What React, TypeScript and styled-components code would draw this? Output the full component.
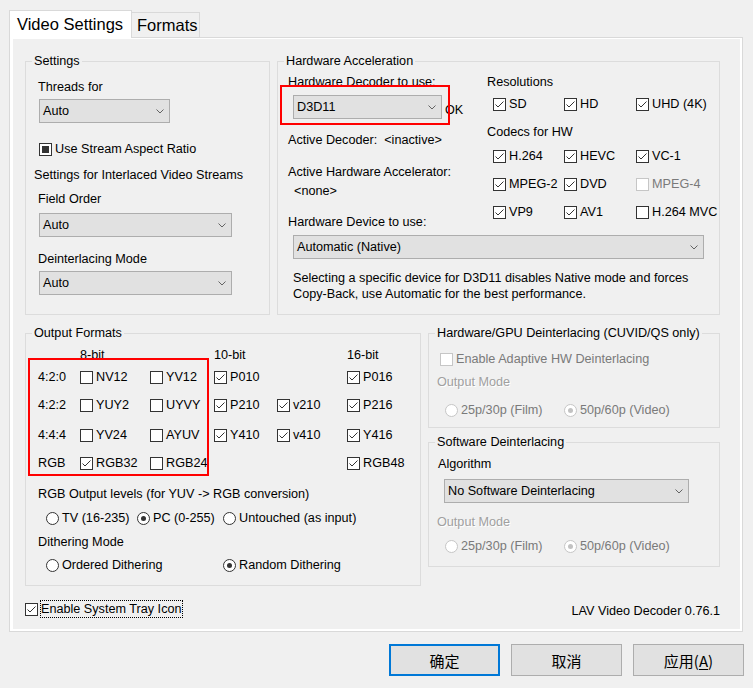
import React from "react";
import styled, { createGlobalStyle } from "styled-components";

const Global = createGlobalStyle`
  html, body { margin: 0; padding: 0; background: #f0f0f0; }
  body {
    font-family: "Liberation Sans", Arial, sans-serif;
    font-size: 12.65px;
    color: #000;
  }
  * { box-sizing: border-box; }
`;

const Window = styled.div`
  width: 753px;
  height: 688px;
  padding: 10px 10px 0 9px;
  display: flex;
  flex-direction: column;
  background: #f0f0f0;
`;

const TabStrip = styled.div`
  display: flex;
  align-items: flex-end;
  height: 28px;
`;

const Tab = styled.div<{ $active?: boolean }>`
  font-size: 16.5px;
  line-height: 20px;
  white-space: nowrap;
  display: flex;
  align-items: center;
  border: 1px solid #d9d9d9;
  ${(p) =>
    p.$active
      ? `
    height: 28px;
    width: 123px;
    padding: 0 0 2px 7px;
    background: #ffffff;
    border-bottom: none;
    position: relative;
    z-index: 1;
  `
      : `
    height: 25px;
    width: 68px;
    padding: 0 0 0 5px;
    margin-bottom: 1px;
    background: #f0f0f0;
    border-left: none;
    border-bottom: none;
  `}
`;

const Page = styled.div`
  height: 595px;
  margin-top: -1px;
  border: 1px solid #d9d9d9;
  background: #ffffff;
  padding: 1px 2px 2px 3px;
  display: flex;
`;

const Inner = styled.div`
  flex: 1;
  background: #f0f0f0;
  padding: 14px 0 0 12px;
  display: flex;
  flex-direction: column;
`;

const Row = styled.div<{ $cols: string; $h: number; $mt?: number }>`
  display: grid;
  grid-template-columns: ${(p) => p.$cols};
  column-gap: 7px;
  height: ${(p) => p.$h}px;
  margin-top: ${(p) => p.$mt ?? 0}px;
`;

const Stack = styled.div<{ $gap?: number }>`
  display: flex;
  flex-direction: column;
  gap: ${(p) => p.$gap ?? 0}px;
`;

const Group = styled.fieldset<{ $h?: number }>`
  margin: 0;
  padding: 0;
  min-width: 0;
  border: 1px solid #dcdcdc;
  height: ${(p) => (p.$h ? `${p.$h}px` : "100%")};
  display: block;
`;

const Legend = styled.legend`
  margin-left: 6px;
  padding: 0 2px;
  line-height: 16px;
  white-space: nowrap;
`;

type Tone = "normal" | "disabled" | "etched";

const Text = styled.div<{ $mt?: number; $ml?: number; $tone?: Tone }>`
  line-height: 16px;
  white-space: nowrap;
  margin-top: ${(p) => p.$mt ?? 0}px;
  margin-left: ${(p) => p.$ml ?? 0}px;
  color: ${(p) =>
    p.$tone === "disabled" ? "#7a7a7a" : p.$tone === "etched" ? "#a0a0a0" : "#000"};
  text-shadow: ${(p) => (p.$tone === "etched" ? "1px 1px 0 #ffffff" : "none")};
`;

const Gap = styled.span<{ $w: number }>`
  display: inline-block;
  width: ${(p) => p.$w}px;
`;

const SelectBox = styled.div<{ $w: number; $mt?: number; $ml?: number }>`
  width: ${(p) => p.$w}px;
  height: 24px;
  margin-top: ${(p) => p.$mt ?? 0}px;
  margin-left: ${(p) => p.$ml ?? 0}px;
  border: 1px solid #adadad;
  background: #e1e1e1;
  display: flex;
  align-items: center;
  justify-content: space-between;
  padding: 0 5px 0 3px;
  line-height: 16px;
  white-space: nowrap;
  flex: none;
`;

const Chevron = () => (
  <svg width="8" height="5" viewBox="0 0 8 5">
    <path d="M0.5 0.5 L4 4 L7.5 0.5" fill="none" stroke="#555" strokeWidth="0.9" />
  </svg>
);

const Select = ({ value, w, mt, ml }: { value: string; w: number; mt?: number; ml?: number }) => (
  <SelectBox $w={w} $mt={mt} $ml={ml}>
    <span>{value}</span>
    <Chevron />
  </SelectBox>
);

const CheckRow = styled.div<{ $mt?: number; $ml?: number; $w?: number }>`
  display: flex;
  align-items: center;
  gap: 3px;
  height: 16px;
  line-height: 16px;
  white-space: nowrap;
  margin-top: ${(p) => p.$mt ?? 0}px;
  margin-left: ${(p) => p.$ml ?? 0}px;
  width: ${(p) => (p.$w ? `${p.$w}px` : "auto")};
  flex: none;
`;

const Box = styled.span<{ $disabled?: boolean; $round?: boolean }>`
  width: 13px;
  height: 13px;
  flex: none;
  border: 1px solid ${(p) => (p.$disabled ? "#c6c6c6" : "#333333")};
  border-radius: ${(p) => (p.$round ? "50%" : "0")};
  background: #ffffff;
  display: inline-flex;
  align-items: center;
  justify-content: center;
`;

const MixedMark = styled.span`
  width: 7px;
  height: 7px;
  background: #333333;
`;

const Dot = styled.span<{ $disabled?: boolean }>`
  width: 5px;
  height: 5px;
  border-radius: 50%;
  background: ${(p) => (p.$disabled ? "#c2c2c2" : "#333333")};
`;

const Tick = () => (
  <svg width="11" height="11" viewBox="0 0 11 11">
    <path d="M1.5 5.5 L4 8 L9.5 2.5" fill="none" stroke="#333" strokeWidth="1" />
  </svg>
);

const Label = styled.span<{ $disabled?: boolean }>`
  color: ${(p) => (p.$disabled ? "#7a7a7a" : "#000")};
`;

type CheckProps = {
  label: string;
  state?: "on" | "off" | "mixed";
  disabled?: boolean;
  mt?: number;
  ml?: number;
};

const Check = ({ label, state = "off", disabled, mt, ml }: CheckProps) => (
  <CheckRow $mt={mt} $ml={ml}>
    <Box $disabled={disabled}>
      {state === "on" && <Tick />}
      {state === "mixed" && <MixedMark />}
    </Box>
    <Label $disabled={disabled}>{label}</Label>
  </CheckRow>
);

const Radio = ({ label, on, disabled, w }: { label: string; on?: boolean; disabled?: boolean; w?: number }) => (
  <CheckRow $w={w}>
    <Box $round $disabled={disabled}>
      {on && <Dot $disabled={disabled} />}
    </Box>
    <Label $disabled={disabled}>{label}</Label>
  </CheckRow>
);

const Highlight = styled.div<{ $l: number; $t: number; $w: number; $h: number }>`
  position: absolute;
  left: ${(p) => p.$l}px;
  top: ${(p) => p.$t}px;
  width: ${(p) => p.$w}px;
  height: ${(p) => p.$h}px;
  border: 2px solid #ff0000;
  pointer-events: none;
`;

/* Hardware acceleration */
const HwGrid = styled.div`
  display: grid;
  grid-template-columns: 209px 1fr;
  grid-template-rows: 145px 16px auto auto;
`;

const HwLeft = styled.div`
  grid-column: 1;
  grid-row: 1;
  display: flex;
  flex-direction: column;
`;

const HwRight = styled.div`
  grid-column: 2;
  grid-row: 1 / span 2;
  display: flex;
  flex-direction: column;
`;

const HwWide = styled.div<{ $row: number; $span?: number }>`
  grid-row: ${(p) => p.$row};
  grid-column: 1 / span ${(p) => p.$span ?? 2};
`;

const DecoderRow = styled.div`
  position: relative;
  display: flex;
  align-items: flex-start;
  margin: 5px 0 0 15px;
`;

const OkText = styled.span`
  margin: 7px 0 0 3px;
  line-height: 16px;
`;

const CodecGrid = styled.div<{ $mt?: number }>`
  display: grid;
  grid-template-columns: 71px 72px auto;
  row-gap: 12px;
  margin-left: 6px;
  margin-top: ${(p) => p.$mt ?? 0}px;
`;

/* Output formats */
const FormatGrid = styled.div`
  position: relative;
  display: grid;
  grid-template-columns: 42px 70px 64px 63px 70px auto;
  grid-template-rows: 22px 28px 30px 28px 16px;
  align-items: start;
  margin: 6px 0 0 12px;
`;

const Cell = styled.div<{ $col: number; $row?: number }>`
  grid-column: ${(p) => p.$col};
  grid-row: ${(p) => p.$row ?? 1};
  line-height: 16px;
  white-space: nowrap;
`;

const RadioLine = styled.div<{ $mt: number; $ml: number }>`
  display: flex;
  margin-top: ${(p) => p.$mt}px;
  margin-left: ${(p) => p.$ml}px;
`;

const Footer = styled.div`
  display: flex;
  justify-content: space-between;
  align-items: flex-start;
  width: 695px;
  margin-top: 14px;
`;

const TrayRow = styled.div`
  display: flex;
  align-items: center;
  gap: 2px;
`;

const FocusLabel = styled.span`
  padding: 1px 1px;
  line-height: 16px;
  outline: 1px dotted #000;
  outline-offset: -1px;
  white-space: nowrap;
`;

const Version = styled.div`
  margin-top: 3px;
  line-height: 16px;
  white-space: nowrap;
`;

const ButtonRow = styled.div`
  display: flex;
  justify-content: flex-end;
  gap: 11px;
  margin-top: 12px;
  margin-right: -1px;
`;

const Button = styled.div<{ $primary?: boolean }>`
  width: 111px;
  height: 32px;
  display: flex;
  align-items: center;
  justify-content: center;
  background: #e1e1e1;
  border: ${(p) => (p.$primary ? "2px solid #0078d7" : "1px solid #adadad")};
  font-family: "Noto Sans CJK SC", "Liberation Sans", sans-serif;
  font-size: 15px;
  color: #000;
`;

const Access = styled.span`
  text-decoration: underline;
  text-underline-offset: 2px;
`;

const fmtRows: { label: string; cells: [number, string, boolean][] }[] = [
  { label: "4:2:0", cells: [[2, "NV12", false], [3, "YV12", false], [4, "P010", true], [6, "P016", true]] },
  { label: "4:2:2", cells: [[2, "YUY2", false], [3, "UYVY", false], [4, "P210", true], [5, "v210", true], [6, "P216", true]] },
  { label: "4:4:4", cells: [[2, "YV24", false], [3, "AYUV", false], [4, "Y410", true], [5, "v410", true], [6, "Y416", true]] },
  { label: "RGB", cells: [[2, "RGB32", true], [3, "RGB24", false], [6, "RGB48", true]] },
];

export default function App() {
  return (
    <>
      <Global />
      <Window>
        <TabStrip>
          <Tab $active>Video Settings</Tab>
          <Tab>Formats</Tab>
        </TabStrip>
        <Page>
          <Inner>
            <Row $cols="245px 443px" $h={262}>
              <Group>
                <Legend>Settings</Legend>
                <Text $mt={10} $ml={12}>Threads for</Text>
                <Select value="Auto" w={131} mt={4} ml={13} />
                <Check label="Use Stream Aspect Ratio" state="mixed" mt={18} ml={13} />
                <Text $mt={10} $ml={8}>Settings for Interlaced Video Streams</Text>
                <Text $mt={8} $ml={12}>Field Order</Text>
                <Select value="Auto" w={193} mt={6} ml={13} />
                <Text $mt={14} $ml={12}>Deinterlacing Mode</Text>
                <Select value="Auto" w={193} mt={4} ml={13} />
              </Group>
              <Group>
                <Legend>Hardware Acceleration</Legend>
                <HwGrid>
                  <HwLeft>
                    <Text $mt={5} $ml={10}>Hardware Decoder to use:</Text>
                    <DecoderRow>
                      <Select value="D3D11" w={149} />
                      <OkText>OK</OkText>
                      <Highlight $l={-13} $t={-10} $w={170} $h={40} />
                    </DecoderRow>
                    <Text $mt={13} $ml={10}>
                      Active Decoder:<Gap $w={7} />&lt;inactive&gt;
                    </Text>
                    <Text $mt={16} $ml={10}>Active Hardware Accelerator:</Text>
                    <Text $mt={3} $ml={16}>&lt;none&gt;</Text>
                  </HwLeft>
                  <HwRight>
                    <Text $mt={5}>Resolutions</Text>
                    <CodecGrid $mt={6}>
                      <Check label="SD" state="on" />
                      <Check label="HD" state="on" />
                      <Check label="UHD (4K)" state="on" />
                    </CodecGrid>
                    <Text $mt={12}>Codecs for HW</Text>
                    <CodecGrid $mt={8}>
                      <Check label="H.264" state="on" />
                      <Check label="HEVC" state="on" />
                      <Check label="VC-1" state="on" />
                      <Check label="MPEG-2" state="on" />
                      <Check label="DVD" state="on" />
                      <Check label="MPEG-4" disabled />
                      <Check label="VP9" state="on" />
                      <Check label="AV1" state="on" />
                      <Check label="H.264 MVC" />
                    </CodecGrid>
                  </HwRight>
                  <HwWide $row={2} $span={1}>
                    <Text $ml={10}>Hardware Device to use:</Text>
                  </HwWide>
                  <HwWide $row={3}>
                    <Select value="Automatic (Native)" w={411} mt={5} ml={15} />
                  </HwWide>
                  <HwWide $row={4}>
                    <Text $mt={11} $ml={15}>
                      Selecting a specific device for D3D11 disables Native mode and forces
                      <br />
                      Copy-Back, use Automatic for the best performance.
                    </Text>
                  </HwWide>
                </HwGrid>
              </Group>
            </Row>

            <Row $cols="396px 292px" $h={261} $mt={10}>
              <Group>
                <Legend>Output Formats</Legend>
                <FormatGrid>
                  <Cell $col={2}>8-bit</Cell>
                  <Cell $col={4}>10-bit</Cell>
                  <Cell $col={6}>16-bit</Cell>
                  {fmtRows.map((r, i) => (
                    <React.Fragment key={r.label}>
                      <Cell $col={1} $row={i + 2}>{r.label}</Cell>
                      {r.cells.map(([col, name, on]) => (
                        <Cell key={name} $col={col} $row={i + 2}>
                          <Check label={name} state={on ? "on" : "off"} />
                        </Cell>
                      ))}
                    </React.Fragment>
                  ))}
                  <Highlight $l={-10} $t={11} $w={181} $h={118} />
                </FormatGrid>
                <Text $mt={15} $ml={12}>RGB Output levels (for YUV -&gt; RGB conversion)</Text>
                <RadioLine $mt={8} $ml={20}>
                  <Radio label="TV (16-235)" w={91} />
                  <Radio label="PC (0-255)" on w={86} />
                  <Radio label="Untouched (as input)" />
                </RadioLine>
                <Text $mt={8} $ml={12}>Dithering Mode</Text>
                <RadioLine $mt={7} $ml={20}>
                  <Radio label="Ordered Dithering" w={177} />
                  <Radio label="Random Dithering" on />
                </RadioLine>
              </Group>
              <Stack $gap={6}>
                <Group $h={103}>
                  <Legend>Hardware/GPU Deinterlacing (CUVID/QS only)</Legend>
                  <Check label="Enable Adaptive HW Deinterlacing" disabled mt={10} ml={11} />
                  <Text $mt={7} $ml={8} $tone="etched">Output Mode</Text>
                  <RadioLine $mt={12} $ml={16}>
                    <Radio label="25p/30p (Film)" disabled w={119} />
                    <Radio label="50p/60p (Video)" on disabled />
                  </RadioLine>
                </Group>
                <Group $h={133}>
                  <Legend>Software Deinterlacing</Legend>
                  <Text $mt={6} $ml={9}>Algorithm</Text>
                  <Select value="No Software Deinterlacing" w={245} mt={7} ml={15} />
                  <Text $mt={11} $ml={8} $tone="etched">Output Mode</Text>
                  <RadioLine $mt={8} $ml={16}>
                    <Radio label="25p/30p (Film)" disabled w={119} />
                    <Radio label="50p/60p (Video)" on disabled />
                  </RadioLine>
                </Group>
              </Stack>
            </Row>

            <Footer>
              <TrayRow>
                <Box>
                  <Tick />
                </Box>
                <FocusLabel>Enable System Tray Icon</FocusLabel>
              </TrayRow>
              <Version>LAV Video Decoder 0.76.1</Version>
            </Footer>
          </Inner>
        </Page>
        <ButtonRow>
          <Button $primary>确定</Button>
          <Button>取消</Button>
          <Button>
            应用(<Access>A</Access>)
          </Button>
        </ButtonRow>
      </Window>
    </>
  );
}
